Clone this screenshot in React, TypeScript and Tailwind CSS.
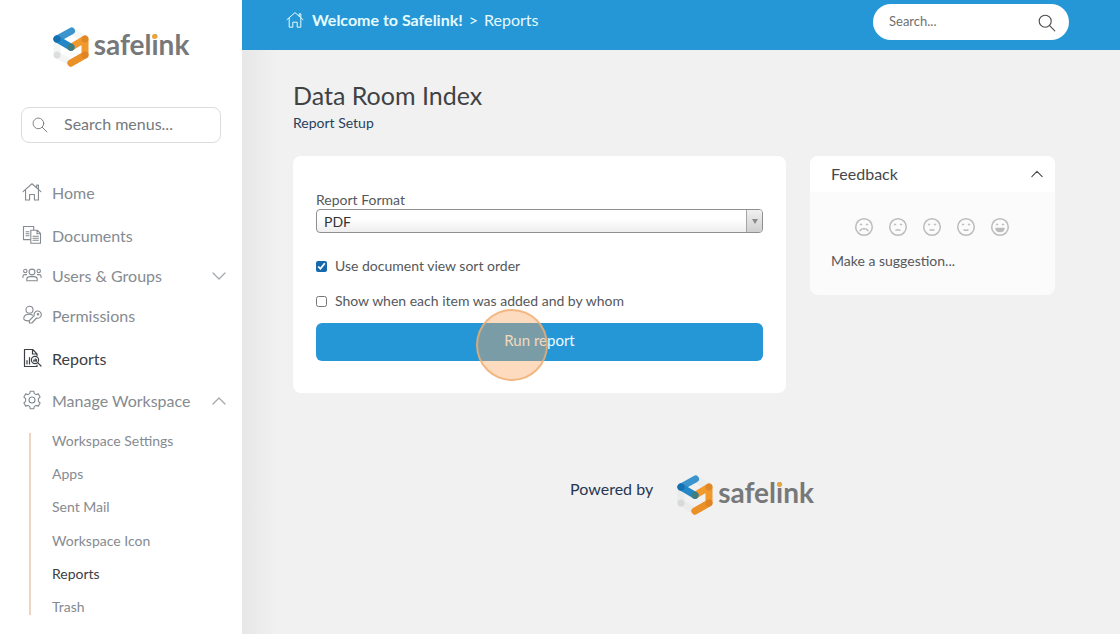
import React from "react";

type IconProps = { className?: string };

const stroke = {
  fill: "none",
  stroke: "currentColor",
  strokeLinecap: "round" as const,
  strokeLinejoin: "round" as const,
};

function HomeIcon({ className }: IconProps) {
  return (
    <svg viewBox="0 0 18 18" className={className} {...stroke} strokeWidth="1" aria-hidden="true">
      <path d="M1 8.600 9 1.600l8 7M13.200 5V2.800h1.600v3.600M3.200 7.200v9h3.600v-5h4.400v5h3.600v-9" />
    </svg>
  );
}

function DocumentsIcon({ className }: IconProps) {
  return (
    <svg viewBox="0 0 20 20" className={className} {...stroke} strokeWidth="1.1" aria-hidden="true">
      <path d="M8 14.600H1.500V1.500h10.200v3M4 6.800h3M4 8.800h3M4 10.800h3" />
      <path d="M8.800 5.200h6.400l3.300 3.300v9.800H8.800zM15 5.400v3.400h3.400M11 11.200h5.400M11 13.200h5.400M11 15.200h5.400" />
    </svg>
  );
}

function UsersIcon({ className }: IconProps) {
  return (
    <svg viewBox="0 0 20 16" className={className} {...stroke} strokeWidth="1.1" aria-hidden="true">
      <circle cx="10" cy="5" r="2.900" />
      <circle cx="3.300" cy="4" r="1.700" />
      <circle cx="16.700" cy="4" r="1.700" />
      <path d="M4.800 13.800v-1.600c0-1.600 1.600-2.600 3.200-2.600h4c1.600 0 3.200 1 3.200 2.600v1.600zM1 10.500V9.200C1 8.200 1.900 7.600 2.800 7.600h1.800M19 10.500V9.200c0-1-.9-1.600-1.800-1.600h-1.800" />
    </svg>
  );
}

function PermissionsIcon({ className }: IconProps) {
  return (
    <svg viewBox="0 0 20 20" className={className} {...stroke} strokeWidth="1.1" aria-hidden="true">
      <circle cx="7.500" cy="4.800" r="3.500" />
      <path d="M10.600 10.200C8 8.600 1.800 9 1.800 13.400c0 1.800 1.600 2.600 5 2.500" />
      <path d="M12.300 10.700a3.600 3.600 0 1 1 2.300 2.300l-4.700 5H7.400v-2.500z" />
      <circle cx="16" cy="9.300" r=".7" />
    </svg>
  );
}

function ReportsIcon({ className }: IconProps) {
  return (
    <svg viewBox="0 0 20 20" className={className} {...stroke} strokeWidth="1.2" aria-hidden="true">
      <path d="M15 17.200v1.300H2.500v-17h8.200L15 5.800v2M10.500 1.700V6H15M5 16v-3.500M7.500 16V9.500" />
      <circle cx="13" cy="12" r="3.600" />
      <path d="m15.700 14.700 3.300 3.300M11.800 13.200v-1.200M13.200 13.200v-2.400M14.500 13.200v-1.500" />
    </svg>
  );
}

function GearIcon({ className }: IconProps) {
  return (
    <svg viewBox="0 0 20 20" className={className} {...stroke} strokeWidth="1.1" aria-hidden="true">
      <circle cx="10" cy="10" r="3" />
      <path d="M8.200 1.300h3.600l.5 2.300 1.700 1 2.300-.7 1.800 3.100-1.700 1.600v2.800l1.700 1.600-1.800 3.100-2.300-.7-1.700 1-.5 2.300H8.200l-.5-2.300-1.700-1-2.300.7L1.900 13l1.700-1.600V8.600L1.900 7l1.800-3.100 2.300.7 1.700-1z" />
    </svg>
  );
}

function SearchIcon({ className }: IconProps) {
  return (
    <svg viewBox="0 0 18 18" className={className} {...stroke} strokeWidth="1.1" aria-hidden="true">
      <circle cx="7.200" cy="7.200" r="6" />
      <path d="m11.600 11.600 5.200 5.200" />
    </svg>
  );
}

function Chevron({ up, className }: IconProps & { up?: boolean }) {
  return (
    <svg viewBox="0 0 14 8" className={className} {...stroke} strokeWidth="1.3" aria-hidden="true">
      <path d={up ? "M1 7l6-6 6 6" : "M1 1l6 6 6-6"} />
    </svg>
  );
}

const mouths = [
  <path key="m" d="M6 13.600c1.500-2.400 6.500-2.400 8 0" />,
  <path key="m" d="M8 13.200c1.200-.6 2.800-.6 4 0" />,
  <path key="m" d="M8 13h4" />,
  <path key="m" d="M8 12.800c1.200.6 2.800.6 4 0" />,
  <path key="m" d="M6 11.500h8c-.4 4-7.600 4-8 0z" fill="currentColor" />,
];

const moods = ["Very dissatisfied", "Dissatisfied", "Neutral", "Satisfied", "Very satisfied"];

function Face({ level }: { level: number }) {
  return (
    <svg viewBox="0 0 20 20" className="size-5" {...stroke} strokeWidth="1.5" aria-hidden="true">
      <circle cx="10" cy="10" r="8.300" />
      <circle cx="7" cy="7.500" r=".7" fill="currentColor" strokeWidth=".8" />
      <circle cx="13" cy="7.500" r=".7" fill="currentColor" strokeWidth=".8" />
      {mouths[level]}
    </svg>
  );
}

function Logo() {
  return (
    <div className="flex items-center gap-[5px]">
      <svg viewBox="0 0 36 40" className="h-10 w-9" fill="none" strokeWidth="7" strokeLinecap="round" strokeLinejoin="round" aria-hidden="true">
        <path d="M18.500 4 32 12M4 12v16l14 8" stroke="#dcdddf" strokeOpacity=".3" />
        <path d="M4 28h.01" stroke="#c8cacc" strokeOpacity=".55" />
        <path d="M18 20.300 32 12v16l-14 8" stroke="#f2992e" />
        <path d="M32 28 18 36" stroke="#e58a22" strokeOpacity=".6" />
        <path d="M32 12h.01M32 28h.01" stroke="#d97c20" strokeOpacity=".6" />
        <path d="M18.500 4 4 12" stroke="#3a94cd" />
        <path d="M4 12l14 8.300" stroke="#2487c8" />
        <path d="M4 12h.01" stroke="#1470b0" />
        <path d="M18 20.300h.01" stroke="#3f7d80" />
      </svg>
      <span className="pb-1.5 text-[28px] leading-[34px] font-bold text-[#77787a]">
        safel
        <span className="relative">
          i
          <span className="absolute top-[7px] left-px size-[5px] rounded-full bg-[#efa53a]" />
        </span>
        nk
      </span>
    </div>
  );
}

const menu = [
  { label: "Home", Icon: HomeIcon, row: "h-11", icon: "size-5" },
  { label: "Documents", Icon: DocumentsIcon, row: "h-[42px]", icon: "size-5" },
  { label: "Users & Groups", Icon: UsersIcon, row: "h-[38px]", icon: "h-4 w-5", chevron: "down" },
  { label: "Permissions", Icon: PermissionsIcon, row: "h-[42px]", icon: "size-5" },
  { label: "Reports", Icon: ReportsIcon, row: "h-11", icon: "size-5", active: true },
  { label: "Manage Workspace", Icon: GearIcon, row: "h-10", icon: "size-5", chevron: "up" },
];

const submenu = ["Workspace Settings", "Apps", "Sent Mail", "Workspace Icon", "Reports", "Trash"];

function Sidebar() {
  return (
    <aside className="w-[242px] shrink-0 bg-white pb-4">
      <div className="flex justify-center pt-[27px]">
        <Logo />
      </div>
      <label className="mx-[21px] mt-10 flex h-9 items-center rounded-lg border border-[#dcdcdc] px-2.5 pb-0.5 text-[#7b8085]">
        <SearchIcon className="mt-0.5 size-4 shrink-0" />
        <input
          type="search"
          aria-label="Search menus"
          placeholder="Search menus..."
          className="ml-4 w-full min-w-0 bg-transparent text-base outline-none placeholder:text-[#74787c]"
        />
      </label>
      <nav className="mt-7">
        <ul>
          {menu.map(({ label, Icon, row, icon, chevron, active }) => (
            <li key={label}>
              <a
                href="#"
                className={`flex items-center pr-4 pl-[22px] text-base ${row} ${active ? "text-[#3c4044]" : "text-[#858b91]"}`}
              >
                <span className="flex w-[30px] shrink-0 pb-0.5">
                  <Icon className={icon} />
                </span>
                <span className="grow whitespace-nowrap">{label}</span>
                {chevron && <Chevron up={chevron === "up"} className="h-2 w-3.5 text-[#a3a8ac]" />}
              </a>
            </li>
          ))}
        </ul>
        <ul className="mt-3 ml-[29px] flex h-[182px] flex-col justify-between border-l-2 border-[#eed5bf]">
          {submenu.map((label) => (
            <li key={label}>
              <a href="#" className={`block pl-[21px] text-sm leading-4 ${label === "Reports" ? "text-[#3c4044]" : "text-[#858b91]"}`}>
                {label}
              </a>
            </li>
          ))}
        </ul>
      </nav>
    </aside>
  );
}

function TopBar() {
  return (
    <header className="flex h-[50px] items-start justify-between bg-[#2597d7] pr-[51px] pl-11">
      <nav aria-label="Breadcrumb" className="flex h-10 items-center text-base text-[#e6fbff]">
        <HomeIcon className="size-[18px]" />
        <a href="#" className="ml-2 font-bold">Welcome to Safelink!</a>
        <span className="mx-1.5">&gt;</span>
        <a href="#">Reports</a>
      </nav>
      <label className="mt-1 flex h-9 w-[196px] items-center rounded-full bg-white pr-[13px] pl-4 text-[#4b4b4b]">
        <input
          type="search"
          aria-label="Search"
          placeholder="Search..."
          className="w-full min-w-0 bg-transparent text-[13px] outline-none placeholder:text-[#6f6f6f]"
        />
        <SearchIcon className="mt-0.5 size-[18px] shrink-0" />
      </label>
    </header>
  );
}

function ReportForm() {
  return (
    <form className="grow rounded-lg bg-white px-[23px] pt-[35px] pb-8 text-sm text-[#55585b]" onSubmit={(e) => e.preventDefault()}>
      <label htmlFor="format" className="block pb-px leading-[17px]">Report Format</label>
      <div className="relative">
        <select
          id="format"
          className="block h-6 w-full appearance-none rounded border border-[#8f8f8f] bg-linear-to-b from-white from-40% to-[#eeeeee] pt-0.5 pl-[7px] text-sm leading-5 text-[#333]"
        >
          <option>PDF</option>
          <option>Excel</option>
        </select>
        <span className="pointer-events-none absolute inset-y-px right-px flex w-4 items-center justify-center rounded-r-[3px] border-l border-[#a5a5a5] bg-linear-to-b from-[#f0f0f0] to-[#cfcfcf]">
          <svg viewBox="0 0 6 5" className="h-[5px] w-1.5" aria-hidden="true">
            <path d="M0 0h6L3 5z" fill="#8a8a8a" />
          </svg>
        </span>
      </div>
      <label className="mt-[23px] flex h-5 items-center gap-2">
        <input type="checkbox" defaultChecked className="size-[11px] accent-[#1769ad]" />
        Use document view sort order
      </label>
      <label className="mt-[15px] flex h-5 items-center gap-2">
        <input type="checkbox" className="size-[11px]" />
        Show when each item was added and by whom
      </label>
      <div className="relative mt-3">
        <button type="submit" className="block h-[38px] w-full rounded-md bg-[#2597d7] pb-0.5 text-[15px] text-[#ecfaff]">
          Run report
        </button>
        <span className="pointer-events-none absolute -top-3.5 left-40 size-[72px] rounded-full border-2 border-[#efae72]/80 bg-[#f9a45c]/40" />
      </div>
    </form>
  );
}

function Feedback() {
  return (
    <section className="w-[245px] shrink-0 overflow-hidden rounded-lg bg-[#fbfbfb] pb-6">
      <button type="button" className="flex h-9 w-full items-center justify-between bg-white pr-3 pl-[21px] text-base text-[#45484b]">
        Feedback
        <Chevron up className="h-2 w-3" />
      </button>
      <div className="flex justify-center gap-3.5 pt-[25px] pr-0.5 text-[#bcbcbc]">
        {moods.map((mood, i) => (
          <button key={mood} type="button" aria-label={mood}>
            <Face level={i} />
          </button>
        ))}
      </div>
      <a href="#" className="mt-3.5 block pl-[21px] text-sm leading-5 text-[#55585b]">Make a suggestion...</a>
    </section>
  );
}

export default function App() {
  return (
    <div className="flex min-h-screen bg-[#f1f1f1] font-['Lato',sans-serif]">
      <Sidebar />
      <div className="flex grow flex-col">
        <TopBar />
        <main className="grow bg-linear-to-r from-[#e7e7e7] to-[#f1f1f1] to-[36px] pr-[65px] pl-[51px]">
          <h1 className="pt-[29px] text-[25px] leading-8 text-[#404244]">Data Room Index</h1>
          <p className="mt-0.5 text-sm leading-5 text-[#27405c]">Report Setup</p>
          <div className="mt-[23px] flex items-start gap-6">
            <ReportForm />
            <Feedback />
          </div>
          <footer className="mt-[82px] flex items-center justify-center gap-6 pl-9 text-base text-[#27364f]">
            <span className="pb-3">Powered by</span>
            <Logo />
          </footer>
        </main>
      </div>
    </div>
  );
}
